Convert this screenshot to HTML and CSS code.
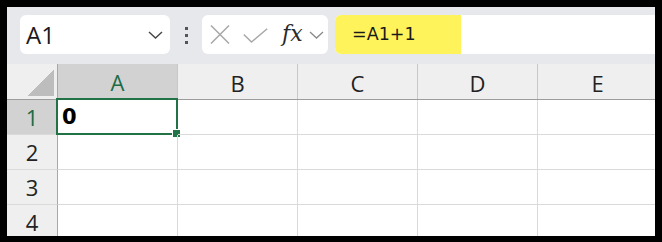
FILE: index.html
```html
<!DOCTYPE html>
<html>
<head>
<meta charset="utf-8">
<link rel="stylesheet" href="styles.css">
</head>
<body>
<div class="frame">
  <div class="toolbar">
    <div class="namebox">
      <span class="ref">A1</span>
      <svg class="chev" width="15" height="8" viewBox="0 0 15 8"><path d="M1 1 L7.5 7 L14 1" fill="none" stroke="#444" stroke-width="1.4"/></svg>
    </div>
    <div class="grip"><i></i><i></i><i></i></div>
    <div class="fxbox">
      <svg class="ico-x" width="20" height="19" viewBox="0 0 20 19"><path d="M1 0.5 L19 18.5 M19 0.5 L1 18.5" fill="none" stroke="#a8a8a8" stroke-width="1.5"/></svg>
      <svg class="ico-check" width="25" height="15" viewBox="0 0 25 15"><path d="M0.8 6.5 L8.5 14 L24.2 0.8" fill="none" stroke="#a8a8a8" stroke-width="1.5"/></svg>
      <span class="fx">fx</span>
      <svg class="chev2" width="15" height="8" viewBox="0 0 15 8"><path d="M1 1 L7.5 7 L14 1" fill="none" stroke="#8a8a8a" stroke-width="1.3"/></svg>
    </div>
    <div class="formula"><span class="hl">=A1+1</span></div>
  </div>
  <div class="sheet">
    <div class="row head">
      <div class="rh corner"><span class="tri"></span></div>
      <div class="ch sel">A</div>
      <div class="ch">B</div>
      <div class="ch">C</div>
      <div class="ch">D</div>
      <div class="ch">E</div>
    </div>
    <div class="row">
      <div class="rh sel">1</div>
      <div class="cell active"><span class="val">0</span><div class="selbox"><span class="handle"></span></div></div>
      <div class="cell"></div><div class="cell"></div><div class="cell"></div><div class="cell"></div>
    </div>
    <div class="row">
      <div class="rh">2</div>
      <div class="cell"></div><div class="cell"></div><div class="cell"></div><div class="cell"></div><div class="cell"></div>
    </div>
    <div class="row">
      <div class="rh">3</div>
      <div class="cell"></div><div class="cell"></div><div class="cell"></div><div class="cell"></div><div class="cell"></div>
    </div>
    <div class="row">
      <div class="rh">4</div>
      <div class="cell"></div><div class="cell"></div><div class="cell"></div><div class="cell"></div><div class="cell"></div>
    </div>
  </div>
</div>
</body>
</html>
```

FILE: styles.css
```css
* { box-sizing: border-box; }
html, body { margin: 0; padding: 0; background: #000; }
.frame {
  width: 662px;
  height: 242px;
  border-style: solid;
  border-color: #000;
  border-width: 7px 7px 6px 7px;
  background: #fff;
  overflow: hidden;
  font-family: "Open Sans", "Noto Sans", sans-serif;
}
.toolbar {
  height: 57px;
  background: #e7e8ec;
  display: flex;
  align-items: flex-start;
  padding: 8px 0 0 13px;
}
.namebox {
  width: 150px;
  height: 39px;
  background: #fff;
  border-radius: 6px;
  display: flex;
  align-items: center;
  justify-content: space-between;
  padding: 0 7px 0 6px;
}
.ref { font-size: 24px; color: #1a1a1a; line-height: 1; margin-top: 1px; }
.chev { display: block; }
.grip {
  width: 32px;
  height: 39px;
  display: flex;
  flex-direction: column;
  align-items: center;
  justify-content: center;
  gap: 4px;
  padding-top: 1px;
}
.grip i { display: block; width: 3px; height: 3px; background: #555; }
.fxbox {
  width: 126px;
  height: 39px;
  background: #fff;
  border-radius: 6px;
  display: flex;
  align-items: center;
  padding-left: 8px;
}
.ico-x { display: block; }
.ico-check { display: block; margin-left: 13px; margin-top: 2px; }
.fx {
  font-family: "DejaVu Serif", "Liberation Serif", serif;
  font-style: italic;
  font-size: 22px;
  color: #2a2a2a;
  margin-left: 14px;
  line-height: 1;
  margin-top: -2px;
}
.chev2 { display: block; margin-left: 6px; margin-top: 1px; }
.formula {
  flex: 1;
  height: 39px;
  margin-left: 7px;
  background: #fff;
  border-radius: 6px 0 0 6px;
  display: flex;
}
.hl {
  width: 126px;
  height: 39px;
  background: #fff35c;
  border-radius: 6px 0 0 6px;
  font-family: "DejaVu Sans", sans-serif;
  font-size: 17.5px;
  line-height: 39px;
  padding-left: 17px;
  color: #1a1a1a;
}
.sheet { display: flex; flex-direction: column; }
.row { display: flex; height: 35px; flex-shrink: 0; }
.row.head { height: 36px; background: #efefef; border-bottom: 1px solid #9c9c9c; }
.rh {
  width: 51px;
  flex-shrink: 0;
  background: #efefef;
  border-right: 1px solid #a8a8a8;
  border-bottom: 1px solid #dadada;
  display: flex;
  align-items: center;
  justify-content: center;
  font-size: 22px;
  color: #222;
}
.rh.sel { background: #d2d2d2; color: #1d6b45; }
.corner { border-bottom: none; align-items: flex-end; justify-content: flex-end; padding: 0 3px 3px 0; }
.tri {
  width: 27px;
  height: 26px;
  background: linear-gradient(to bottom right, transparent 50%, #bdbdbd 50%);
}
.ch {
  width: 120px;
  flex-shrink: 0;
  border-right: 1px solid #c8c8c8;
  display: flex;
  align-items: center;
  justify-content: center;
  font-size: 22px;
  color: #222;
  padding-top: 2px;
}
.ch.sel { background: #d2d2d2; color: #1d6b45; border-bottom: 2px solid #217346; margin-bottom: -1px; }
.cell {
  width: 120px;
  flex-shrink: 0;
  border-right: 1px solid #dadada;
  border-bottom: 1px solid #dadada;
  position: relative;
}
.val {
  display: block;
  font-family: "DejaVu Sans", sans-serif;
  font-weight: 700;
  font-size: 21px;
  line-height: 34px;
  padding-left: 4px;
  color: #000;
}
.selbox {
  position: absolute;
  top: -2px;
  left: -2px;
  right: -1px;
  bottom: -1px;
  border: 2px solid #217346;
}
.handle {
  position: absolute;
  right: -4px;
  bottom: -4px;
  width: 7px;
  height: 7px;
  background: #217346;
  outline: 1px solid #fff;
}
```
